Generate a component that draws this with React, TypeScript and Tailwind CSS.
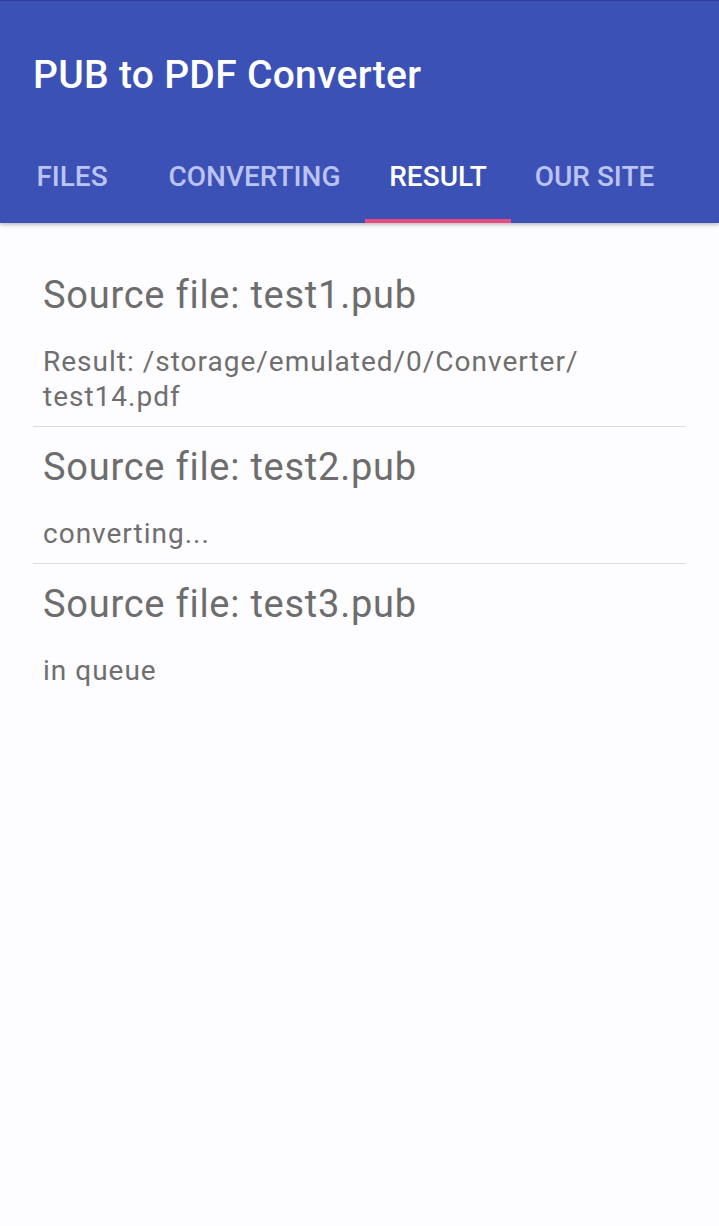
import type { ReactNode } from "react"

const tabs = [
  { label: "FILES", w: "w-[118px] mr-[14px]" },
  { label: "CONVERTING", w: "w-[219px]" },
  { label: "RESULT", w: "w-[146px] ml-px", active: true },
  { label: "OUR SITE", w: "w-[167px]" },
]

const items: { title: string; status: ReactNode }[] = [
  {
    title: "Source file: test1.pub",
    status: (
      <>
        Result: /storage/emulated/0/Converter/
        <wbr />
        test14.pdf
      </>
    ),
  },
  { title: "Source file: test2.pub", status: "converting..." },
  { title: "Source file: test3.pub", status: "in queue" },
]

export default function App() {
  return (
    <div className="min-h-[1226px] w-[719px] bg-[#fdfcfe] font-['Roboto',sans-serif]">
      <header className="relative z-10 border-t border-[#2f3f94] bg-[#3c51b5] shadow-[0_2px_4px_rgba(0,0,0,0.25)]">
        <h1 className="pl-[33px] pt-[51px] text-[39px] leading-[46px] font-medium tracking-[0.3px] text-white">
          PUB to PDF Converter
        </h1>
        <nav className="mt-[63px] flex pl-[13px]">
          {tabs.map((t) => (
            <div
              key={t.label}
              className={`${t.w} border-b-4 pb-[26px] text-center text-[28px] leading-[32px] font-medium ${
                t.active ? "border-[#ea4a80] text-white" : "border-transparent text-[#bac3f2]"
              }`}
            >
              {t.label}
            </div>
          ))}
        </nav>
      </header>

      <main className="px-[33px] pt-[32px]">
        {items.map((it, i) => (
          <div key={i} className={`px-[10px] pt-[18px] pb-[12px] ${i < 2 ? "border-b border-[#dddddd]" : ""}`}>
            <div className="text-[38px] leading-[44px] tracking-[0.75px] text-[#6d6d6d]">{it.title}</div>
            <div className="mt-[27px] text-[28px] leading-[35px] tracking-[1px] text-[#6f6f6f]">{it.status}</div>
          </div>
        ))}
      </main>
    </div>
  )
}
